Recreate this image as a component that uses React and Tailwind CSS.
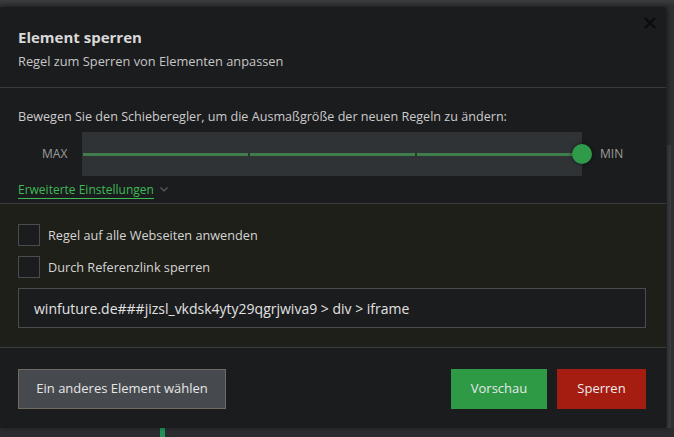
import React from "react";

function Checkbox({ label, className = "" }) {
  return (
    <label className={`flex items-center gap-[8px] ${className}`}>
      <span className="w-[22px] h-[22px] border border-[#4a4b4d] bg-[#1b1c1e]" />
      <span className="text-[12.7px] leading-[18px] text-[#d4d4d4]">{label}</span>
    </label>
  );
}

function Slider() {
  return (
    <div className="flex items-center mt-[6px]">
      <span className="w-[82px] pl-[42px] text-[12px] text-[#9c9c9c]">MAX</span>
      <div className="relative w-[500px] h-[44px] bg-[#303336] flex items-center">
        {/* track segments */}
        <div className="flex w-full gap-[2px] pl-[1px]">
          <div className="flex-1 h-[3px] bg-[#3f7d4c]" />
          <div className="flex-1 h-[3px] bg-[#3f7d4c]" />
          <div className="flex-1 h-[3px] bg-[#3f7d4c]" />
        </div>
        <span className="absolute right-[-10px] top-[12px] w-[20px] h-[20px] rounded-full bg-[#2f9a49] shadow-[0_0_4px_rgba(0,0,0,0.6)]" />
      </div>
      <span className="ml-[18px] text-[12px] text-[#9c9c9c]">MIN</span>
    </div>
  );
}

export default function App() {
  return (
    <div
      className="w-[674px] h-[437px] overflow-hidden bg-[#2d2e30] flex flex-col"
      style={{ fontFamily: '"Open Sans", "Noto Sans", sans-serif' }}
    >
      <div className="h-[7px] bg-gradient-to-b from-[#3c3d3f] to-[#2b2c2e]" />
      <div className="flex">
        <div className="relative w-[666px] h-[421px] bg-[#1b1c1e] rounded-tr-[4px] flex flex-col shadow-[2px_0_4px_rgba(0,0,0,0.4)]">
          {/* close */}
          <button className="absolute top-[10px] right-[10px] w-[12px] h-[12px]">
            <svg viewBox="0 0 12 12" className="w-[12px] h-[12px]">
              <path d="M1 1 L11 11 M11 1 L1 11" stroke="#0c0c0c" strokeWidth="2.4" />
            </svg>
          </button>

          {/* header */}
          <div className="h-[81px] border-b border-[#3a3b3d] px-[18px] pt-[20px]">
            <h2 className="text-[15px] leading-[20px] font-bold text-[#d9d9d9]">Element sperren</h2>
            <p className="mt-[6px] text-[12.8px] leading-[16px] text-[#c6c6c6]">
              Regel zum Sperren von Elementen anpassen
            </p>
          </div>

          {/* slider */}
          <div className="h-[116px] border-b border-[#3a3b3d] pt-[20px]">
            <p className="px-[18px] text-[12.6px] leading-[18px] text-[#cbcbcb]">
              Bewegen Sie den Schieberegler, um die Ausmaßgröße der neuen Regeln zu ändern:
            </p>
            <Slider />
            <div className="flex items-center gap-[6px] px-[18px] mt-[6px]">
              <span className="text-[12px] leading-[16px] text-[#3dbb55] border-b border-[#3dbb55]">
                Erweiterte Einstellungen
              </span>
              <svg viewBox="0 0 8 5" className="w-[8px] h-[5px] mb-[3px]">
                <path d="M0.5 0.5 L4 4 L7.5 0.5" stroke="#5c5d60" strokeWidth="1.2" fill="none" />
              </svg>
            </div>
          </div>

          {/* options */}
          <div className="h-[144px] bg-[#1f1f19] border-b border-[#3a3b3d] px-[18px] pt-[20px]">
            <Checkbox label="Regel auf alle Webseiten anwenden" />
            <Checkbox label="Durch Referenzlink sperren" className="mt-[10px]" />
            <div className="mt-[10px] w-[628px] h-[40px] border border-[#4a4b4d] bg-[#1b1c1e] flex items-center pl-[15px]">
              <span className="text-[14px] text-[#e2e2e2]">
                winfuture.de###jizsl_vkdsk4yty29qgrjwiva9 &gt; div &gt; iframe
              </span>
            </div>
          </div>

          {/* footer */}
          <div className="flex-1 flex items-start pt-[21px] pl-[18px] pr-[20px]">
            <button className="w-[208px] h-[40px] bg-[#464a4e] border border-[#6f6b63] text-[13px] text-[#e6e6e6]">
              Ein anderes Element wählen
            </button>
            <div className="ml-auto flex gap-[10px]">
              <button className="w-[96px] h-[40px] bg-[#2e9a46] text-[13px] text-[#e8e8e8]">Vorschau</button>
              <button className="w-[89px] h-[40px] bg-[#a51d10] text-[13px] text-[#ececec]">Sperren</button>
            </div>
          </div>
        </div>
        {/* scrollbar strip */}
        <div className="w-[8px] flex flex-col bg-[#2f3032]">
          <div className="h-[138px]" />
          <div className="flex-1 ml-[1px] w-[4px] bg-[#3e3f41]" />
        </div>
      </div>
      <div className="flex-1 bg-[#2b2c2f]">
        <div className="ml-[160px] w-[5px] h-full bg-[#22915a]" />
      </div>
    </div>
  );
}
